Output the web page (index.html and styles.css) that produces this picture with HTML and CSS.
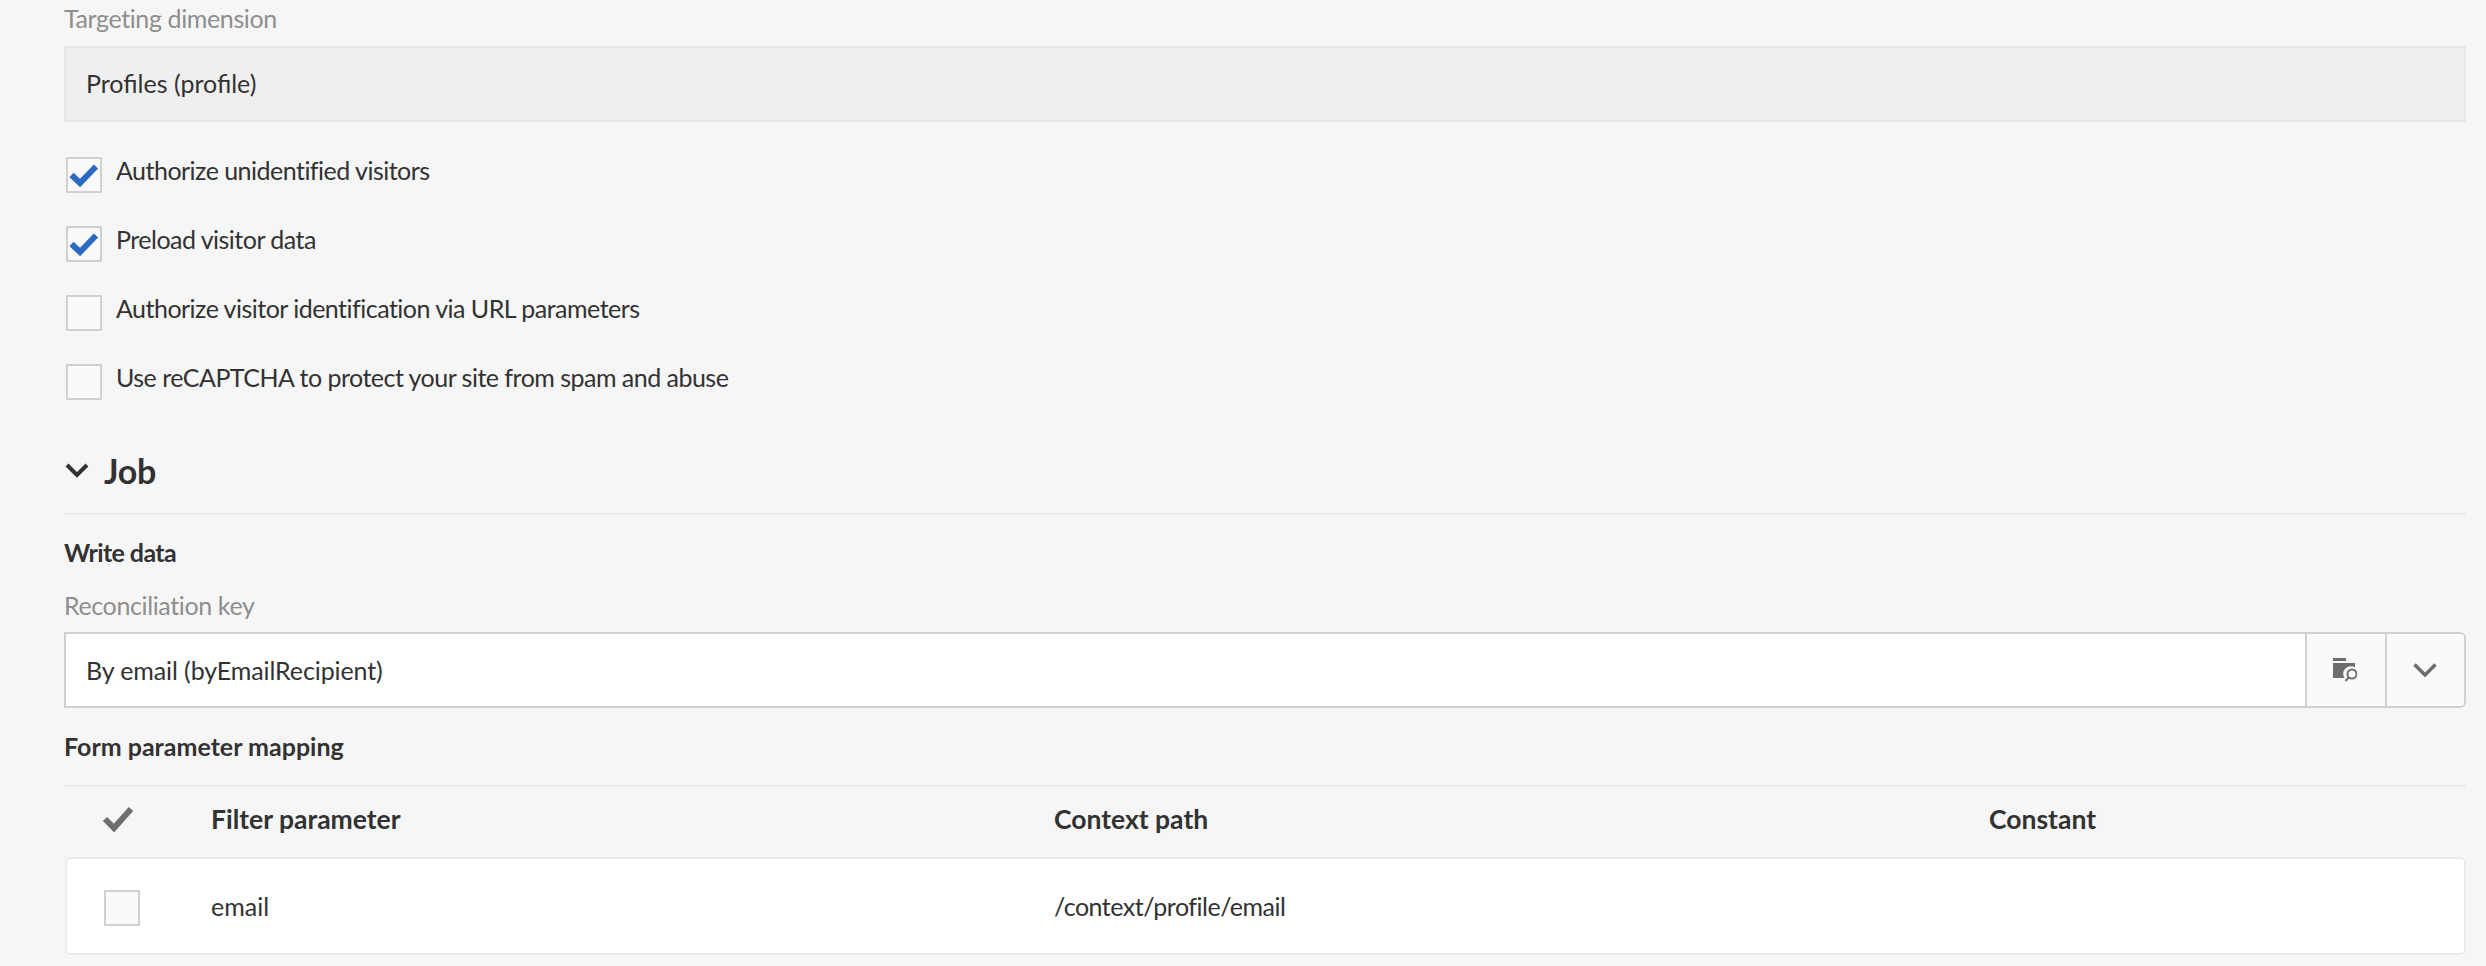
FILE: index.html
```html
<!DOCTYPE html>
<html lang="en">
<head>
    <meta charset="UTF-8">
    <meta name="viewport" content="width=device-width, initial-scale=1.0">
    <title>Landing page properties</title>
    <link rel="stylesheet" href="styles.css">
</head>
<body>
    <div class="container">
        <div class="field-label first">Targeting dimension</div>
        <div class="readonly-field">Profiles (profile)</div>

        <div class="options">
            <label class="option">
                <span class="checkbox">
                    <svg viewBox="0 0 36 36" width="36" height="36"><path class="tick" d="M5.5 18 L14 26 L30 9.5"/></svg>
                </span>
                Authorize unidentified visitors
            </label>
            <label class="option">
                <span class="checkbox">
                    <svg viewBox="0 0 36 36" width="36" height="36"><path class="tick" d="M5.5 18 L14 26 L30 9.5"/></svg>
                </span>
                Preload visitor data
            </label>
            <label class="option">
                <span class="checkbox"></span>
                Authorize visitor identification via URL parameters
            </label>
            <label class="option">
                <span class="checkbox"></span>
                Use reCAPTCHA to protect your site from spam and abuse
            </label>
        </div>

        <div class="section-head">
            <svg class="section-chevron" viewBox="0 0 24 16" width="24" height="16"><path d="M2 2 L12 12 L22 2"/></svg>
            <h2>Job</h2>
        </div>

        <div class="sub-title write-data">Write data</div>
        <div class="field-label">Reconciliation key</div>
        <div class="picker">
            <div class="picker-value">By email (byEmailRecipient)</div>
            <button class="picker-btn folder-btn" type="button">
                <svg viewBox="0 0 24 24" width="24" height="24">
                    <path class="folder" d="M0 0 H13 V3 H0 Z"/>
                    <path class="folder" d="M0 5 H22 V9.5 A7.5 7.5 0 0 0 11.6 20 H0 Z"/>
                    <circle class="lens" cx="19" cy="16" r="4.5"/>
                    <path class="lens" d="M15.5 19.5 L12.5 23"/>
                </svg>
            </button>
            <button class="picker-btn arrow-btn" type="button">
                <svg viewBox="0 0 24 14" width="24" height="14"><path d="M1.5 1.5 L12 12 L22.5 1.5"/></svg>
            </button>
        </div>

        <div class="sub-title mapping">Form parameter mapping</div>
        <div class="mapping-table">
            <div class="table-row table-head">
                <div class="select-cell">
                    <svg viewBox="0 0 32 26" width="32" height="26"><path d="M3 13 L12 22 L29 3"/></svg>
                </div>
                <div>Filter parameter</div>
                <div>Context path</div>
                <div>Constant</div>
            </div>
            <div class="table-row table-card">
                <div class="select-cell"><span class="checkbox"></span></div>
                <div>email</div>
                <div class="path-cell">/context/profile/email</div>
                <div></div>
            </div>
        </div>
    </div>
</body>
</html>
```

FILE: styles.css
```css
html, body {
    margin: 0;
    height: 100%;
    overflow: hidden;
}
body {
    background-color: #f6f6f6;
    color: #323232;
    font-family: Lato, "Open Sans", sans-serif;
    font-size: 25px;
}
.container {
    padding: 0 20px 0 64px;
}
.field-label {
    color: #8e8e8e;
    line-height: 30px;
    margin-bottom: 12px;
    letter-spacing: -0.38px;
}
.field-label.first {
    margin-top: 3px;
    margin-bottom: 13px;
}
.readonly-field {
    box-sizing: border-box;
    height: 76px;
    line-height: 70px;
    padding-left: 20px;
    background-color: #efefef;
    border: 2px solid #e8e8e8;
}
.options {
    margin-top: 35px;
    padding-left: 2px;
}
.option {
    display: flex;
    align-items: flex-start;
    gap: 14px;
    height: 69px;
    line-height: 27px;
    letter-spacing: -0.52px;
}
.checkbox {
    box-sizing: border-box;
    display: block;
    flex: none;
    width: 36px;
    height: 36px;
    background-color: #fafafa;
    border: 2px solid #d0d0d0;
}
.checkbox svg {
    display: block;
    margin: -2px;
}
.tick {
    fill: none;
    stroke: #2d6ac4;
    stroke-width: 6;
}
.section-head {
    box-sizing: content-box;
    display: flex;
    align-items: center;
    gap: 15px;
    height: 73px;
    margin-top: 1px;
    padding-left: 1px;
    padding-bottom: 6px;
    border-bottom: 2px solid #e9e9e9;
}
.section-head h2 {
    margin: 0;
    font-size: 34px;
    font-weight: 700;
    letter-spacing: -0.3px;
}
.section-chevron path {
    fill: none;
    stroke: #323232;
    stroke-width: 4;
}
.sub-title {
    font-weight: 700;
    line-height: 30px;
}
.write-data {
    margin-top: 22px;
    margin-bottom: 23px;
    letter-spacing: -0.6px;
}
.picker {
    box-sizing: border-box;
    display: flex;
    height: 76px;
    background-color: #fff;
    border: 2px solid #d0d0d0;
    border-radius: 0 6px 6px 0;
}
.picker-value {
    flex: 1;
    line-height: 72px;
    padding-left: 20px;
    letter-spacing: -0.1px;
}
.picker-btn {
    display: flex;
    align-items: center;
    justify-content: center;
    padding: 0 2px 0 0;
    background-color: #fafafa;
    border: none;
    border-left: 2px solid #d0d0d0;
}
.folder-btn {
    width: 80px;
}
.arrow-btn {
    width: 79px;
    border-radius: 0 4px 4px 0;
}
.folder {
    fill: #6e6e6e;
}
.lens {
    fill: none;
    stroke: #6e6e6e;
    stroke-width: 2;
}
.arrow-btn path {
    fill: none;
    stroke: #6e6e6e;
    stroke-width: 3.5;
}
.mapping {
    margin-top: 23px;
}
.mapping-table {
    margin-top: 24px;
    border-top: 2px solid #e9e9e9;
}
.table-row {
    display: grid;
    grid-template-columns: 147px 843px 935px 1fr;
    align-items: center;
}
.table-head {
    box-sizing: border-box;
    height: 70px;
    padding-bottom: 6px;
    font-size: 26.5px;
    font-weight: 700;
}
.table-card {
    box-sizing: border-box;
    height: 98px;
    background-color: #fff;
    border: 2px solid #ebebeb;
    border-radius: 6px;
    margin-left: 1px;
    grid-template-columns: 144px 843px 935px 1fr;
}
.path-cell {
    letter-spacing: -0.5px;
}
.select-cell {
    display: flex;
    padding-left: 37px;
}
.table-card .select-cell {
    padding-top: 4px;
}
.table-head .select-cell {
    padding-left: 38px;
}
.select-cell path {
    fill: none;
    stroke: #6e6e6e;
    stroke-width: 6;
}
```
